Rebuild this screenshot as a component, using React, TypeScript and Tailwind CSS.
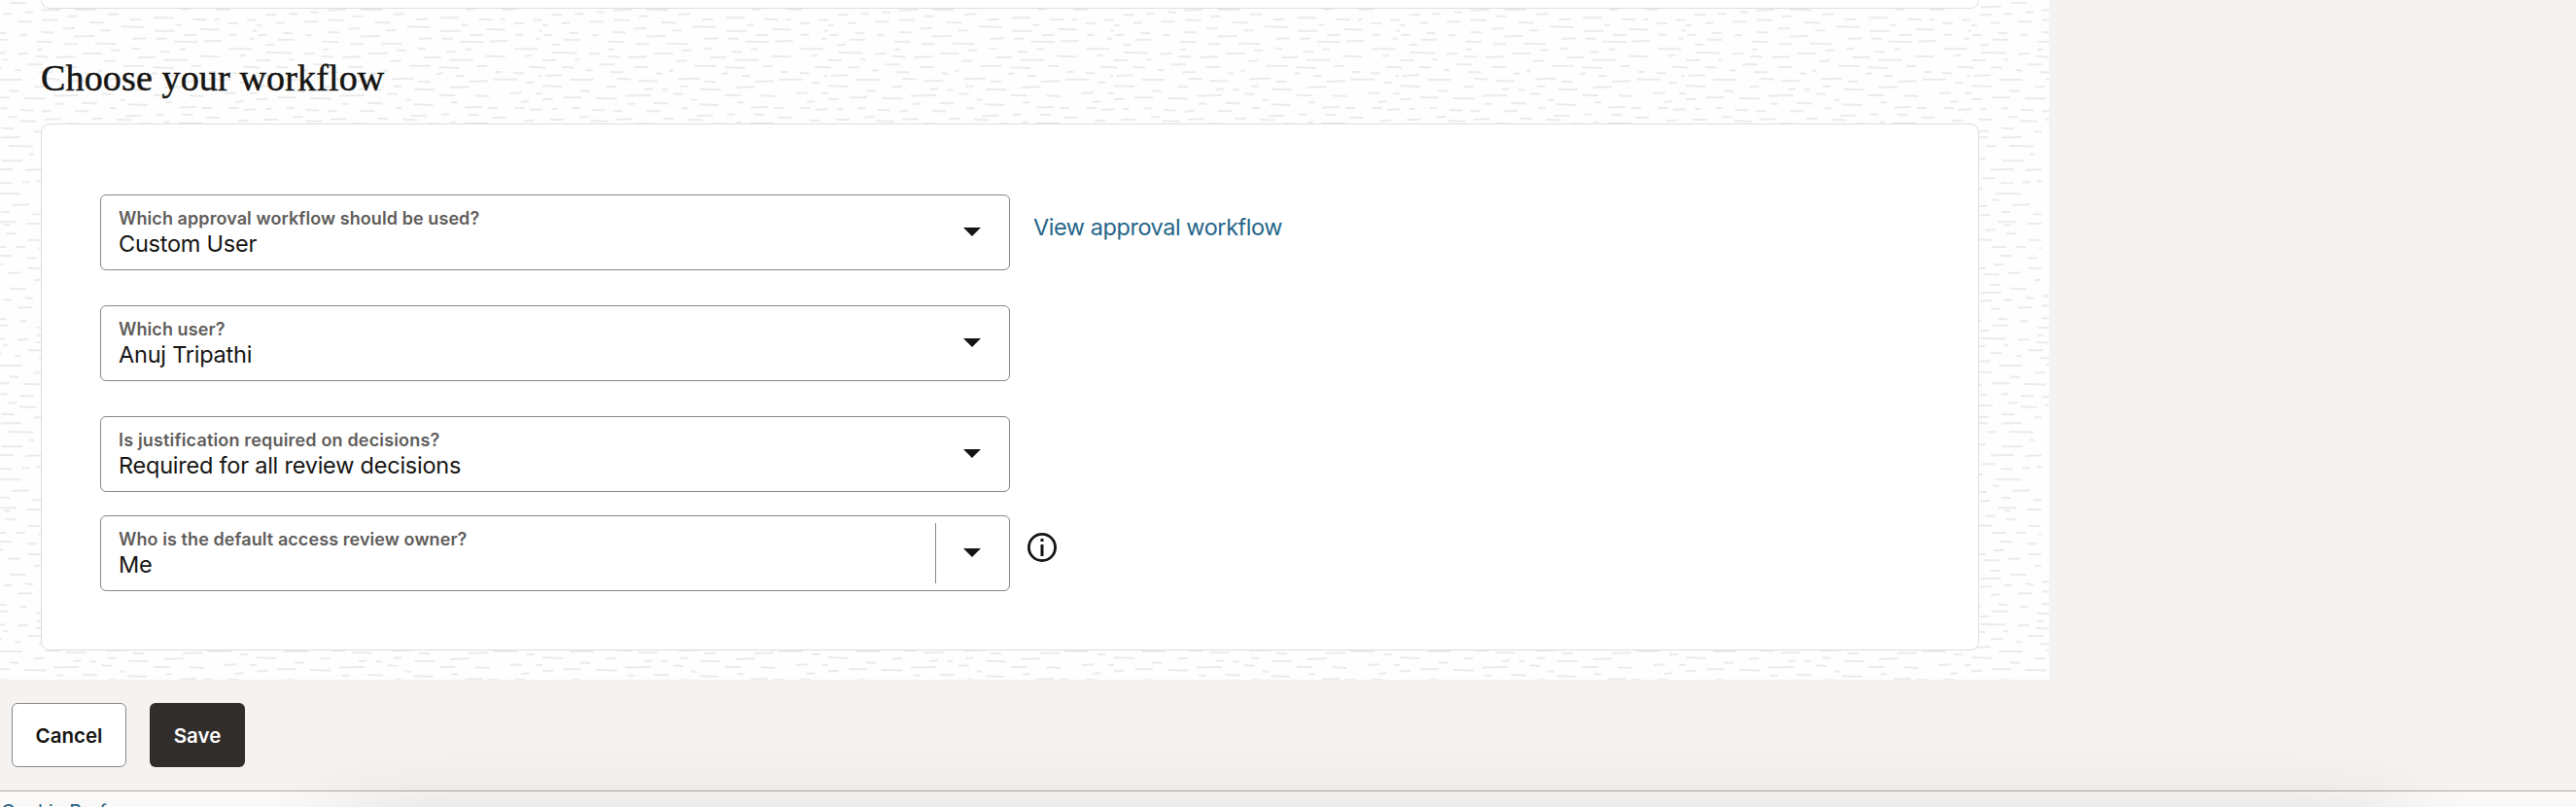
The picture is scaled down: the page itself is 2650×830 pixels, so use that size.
import React from 'react';

// [start, end, y] of each stroke, in thirds of a pixel
const LEFT_STROKES = [
  [28, 62, 27], [100, 126, 24], [167, 192, 19], [218, 275, 12], [297, 328, 31], [320, 388, 11], [421, 457, 25],
  [145, 188, 48], [219, 268, 43], [60, 87, 52], [0, 17, 59], [366, 413, 51], [284, 321, 69], [400, 430, 75],
  [82, 111, 83], [4, 31, 89], [151, 173, 90], [218, 256, 81], [320, 380, 93], [65, 115, 103], [203, 253, 110],
  [28, 54, 119], [288, 329, 117], [384, 450, 116], [204, 222, 134], [432, 460, 136], [30, 107, 144], [144, 178, 147],
  [345, 404, 146], [200, 238, 156], [265, 322, 157], [0, 43, 167], [100, 115, 165], [412, 446, 169], [175, 222, 180],
  [60, 96, 189], [0, 9, 190], [284, 328, 188], [136, 155, 198], [391, 404, 199], [210, 252, 204], [351, 370, 208],
  [8, 60, 214], [85, 158, 227], [230, 274, 225], [418, 484, 224], [295, 355, 231], [0, 62, 247], [196, 227, 249],
  [423, 448, 247], [118, 148, 262], [315, 340, 256], [367, 386, 258], [403, 434, 271], [0, 33, 287], [64, 120, 282],
  [165, 230, 285], [255, 333, 276], [262, 285, 301], [343, 390, 300], [28, 46, 317], [92, 115, 315], [153, 193, 321],
  [218, 247, 324], [321, 364, 324], [428, 450, 315], [113, 143, 342], [22, 66, 350], [150, 203, 355], [228, 278, 349],
  [373, 406, 347], [295, 338, 363],
];

const RIGHT_STROKES = [
  [53, 89, 41], [127, 187, 36], [247, 290, 41], [314, 329, 41], [355, 387, 53], [415, 443, 43], [210, 236, 10],
  [318, 362, 10], [26, 98, 64], [194, 213, 58], [130, 190, 76], [271, 329, 72], [220, 260, 89], [360, 384, 88],
  [432, 444, 76], [62, 105, 100], [135, 168, 100], [188, 262, 110], [280, 335, 108], [422, 438, 100], [58, 83, 131],
  [206, 226, 133], [358, 430, 132], [146, 177, 141], [78, 131, 158], [156, 230, 166], [268, 329, 155], [390, 411, 153],
  [32, 98, 184], [125, 187, 190], [242, 273, 185], [298, 320, 203], [402, 448, 188], [118, 137, 208], [176, 202, 215],
  [355, 385, 207], [431, 441, 216], [292, 366, 226], [62, 96, 233], [216, 276, 232], [393, 418, 236], [49, 111, 257],
  [158, 218, 250], [126, 175, 275], [236, 280, 277], [344, 381, 268], [424, 444, 269], [20, 38, 289], [378, 403, 295],
  [163, 183, 297], [46, 106, 304], [205, 258, 312], [276, 306, 314], [358, 390, 314], [405, 444, 319], [132, 157, 334],
  [214, 248, 335], [38, 88, 338], [289, 331, 344], [12, 58, 351], [385, 418, 353], [202, 276, 361], [90, 122, 363],
  [160, 177, 358],
];

const LOWER_STROKES = [
  [0, 30, 44], [0, 27, 63], [70, 108, 35], [68, 130, 63], [22, 53, 90], [93, 168, 90], [0, 20, 129], [72, 136, 135],
  [0, 3, 155], [36, 106, 162], [8, 48, 189], [67, 105, 204], [0, 12, 221], [52, 129, 237], [42, 62, 256], [103, 156, 271],
  [0, 24, 275], [68, 97, 293], [4, 34, 303], [57, 116, 324], [78, 98, 333], [18, 50, 349], [82, 116, 360], [0, 40, 379],
  [39, 84, 401], [115, 144, 401], [63, 103, 428], [46, 76, 455], [0, 20, 467], [16, 62, 486], [89, 127, 481],
  [35, 63, 518], [97, 146, 530], [5, 67, 542], [171, 192, 45], [156, 171, 115], [144, 192, 163], [133, 157, 201],
  [178, 194, 198], [166, 192, 300], [148, 192, 329], [152, 189, 380], [184, 192, 405], [149, 179, 435], [152, 192, 467],
  [171, 191, 503],
];

function strokePath(strokes: number[][], dx: number, dy: number) {
  return strokes
    .map(([x1, x2, y], i) => {
      const slant = ((i % 3) - 1) * 0.3;
      return `M${dx + x1 / 3} ${dy + y / 3 - slant}L${dx + x2 / 3} ${dy + y / 3 + slant}`;
    })
    .join('');
}

function Texture() {
  return (
    <svg className="absolute inset-0 w-full h-full" fill="none">
      <defs>
        <pattern id="strokes" width="294" height="294" patternUnits="userSpaceOnUse" patternTransform="translate(-30 9)">
          <g stroke="#ebebea" strokeWidth="2">
            <path d={strokePath(LEFT_STROKES, 0, -2.7)} />
            <path d={strokePath(RIGHT_STROKES, 146, -2.7)} />
            <path d={strokePath(LOWER_STROKES, 8, 111.3)} />
          </g>
        </pattern>
      </defs>
      <rect width="100%" height="100%" fill="url(#strokes)" />
    </svg>
  );
}

type SelectProps = {
  label: string;
  value: string;
  labelClass?: string;
  divider?: boolean;
};

function SelectField({ label, value, labelClass = 'tracking-[0.08px]', divider }: SelectProps) {
  return (
    <div className="w-[936px] h-[78px] shrink-0 flex items-center border border-[#8b8886] rounded-md bg-white">
      <div className="flex-1 pl-[18px] pt-0.5 whitespace-nowrap">
        <div className={`text-[18px] leading-[22px] font-semibold text-[#5f5d5b] ${labelClass}`}>{label}</div>
        <div className="text-[23.5px] leading-[30px] tracking-[-0.23px] text-[#161513]">{value}</div>
      </div>
      {divider && <div className="w-px h-[62px] bg-[#8b8886]" />}
      <div className="w-[75px] flex justify-center pr-0.5 pb-0.5">
        <svg className="w-[18px] h-[9px]" viewBox="0 0 18 9" fill="#161513">
          <path d="M0 0h18L9 9z" />
        </svg>
      </div>
    </div>
  );
}

export default function App() {
  return (
    <div className="relative w-[2650px] h-[830px] overflow-hidden bg-[#f4f3f1] font-['Inter',sans-serif] text-[#161513]">
      <div className="relative w-[2108px] h-[699px] bg-[#fefefe] pl-[42px] pr-[72px]">
        <Texture />
        <div className="relative w-[1994px] h-[9px] rounded-b-[9px] border border-t-0 border-[#dfdedd] bg-white" />
        <h2 className="relative h-[118px] pt-[41px] text-[38px] leading-[60px] tracking-[0.15px] font-['Liberation_Serif',serif] [-webkit-text-stroke:0.5px_#161513]">
          Choose your workflow
        </h2>

        <div className="relative w-[1994px] h-[542px] rounded-[9px] border border-[#dfdedd] bg-white pl-[60px] pt-[72px]">
          <div className="flex mb-9">
            <SelectField label="Which approval workflow should be used?" value="Custom User" />
            <a className="ml-6 mt-[19px] text-[23.5px] leading-[30px] tracking-[-0.45px] text-[#266589]">View approval workflow</a>
          </div>
          <div className="mb-9">
            <SelectField label="Which user?" value="Anuj Tripathi" />
          </div>
          <div className="mb-6">
            <SelectField
              label="Is justification required on decisions?"
              value="Required for all review decisions"
              labelClass="tracking-[0.17px]"
            />
          </div>
          <div className="flex">
            <SelectField label="Who is the default access review owner?" value="Me" divider />
            <svg className="ml-[18px] mt-[18px] w-[30px] h-[30px]" viewBox="0 0 30 30" fill="none">
              <circle cx="15" cy="15" r="13.6" stroke="#161513" strokeWidth="2.8" />
              <path d="M13.5 6h3v3h-3zM13.5 12h3v12h-3z" fill="#161513" />
            </svg>
          </div>
        </div>
      </div>

      {/* Actions */}
      <div className="h-[114px] pt-6 pl-3 flex gap-6 text-[20.5px] font-semibold">
        <button className="w-[118px] h-[66px] pt-0.5 rounded-md border border-[#8b8886] bg-white">Cancel</button>
        <button className="w-[98px] h-[66px] pt-0.5 rounded-md bg-[#312d2a] text-white">Save</button>
      </div>

      {/* Footer */}
      <div className="h-[17px] border-t border-[#aeacab] bg-[#fbf9f8]">
        <p className="pt-[9px] pl-px text-[20px] leading-[24px] tracking-[-0.2px] text-[#266589]">Cookie Preferences</p>
      </div>

      {/* Shadow cast by the window below */}
      <div className="absolute left-[350px] top-[850px] w-[2120px] h-[200px] shadow-[0_0_90px_rgba(0,0,0,0.16)]" />
    </div>
  );
}
